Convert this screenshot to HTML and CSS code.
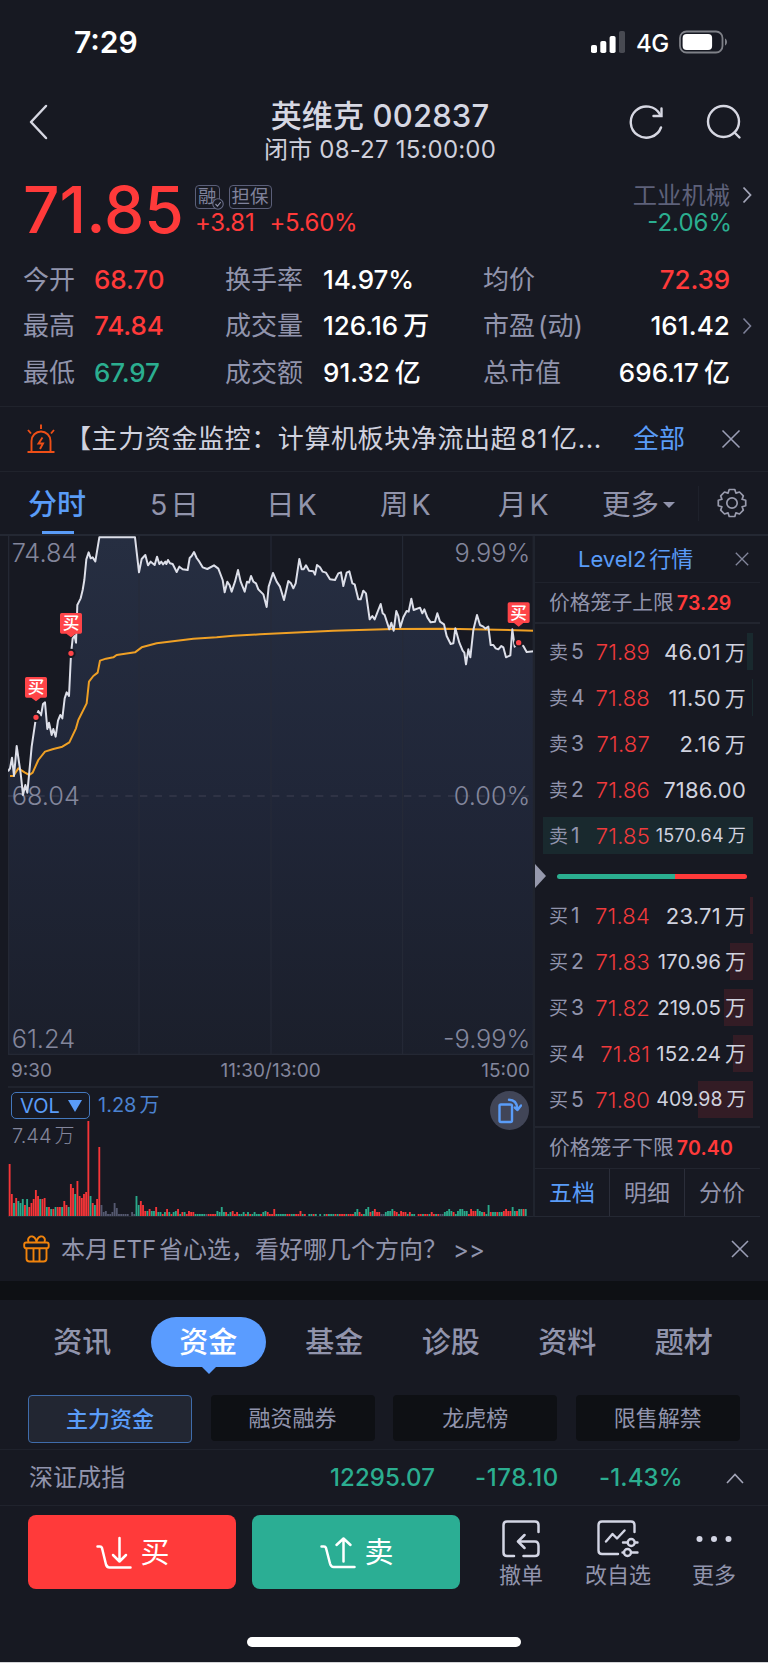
FILE: index.html
```html
<!DOCTYPE html>
<html lang="zh-CN">
<head>
    <meta charset="UTF-8">
    <meta name="viewport" content="width=device-width, initial-scale=1.0">
    <title>英维克 002837</title>
    <link rel="stylesheet" href="styles.css">
</head>
<body>
    <div class="status-bar">
        <span class="clock">7:29</span>
        <div class="status-icons">
            <svg class="signal" width="35" height="22" viewBox="0 0 35 22">
                <rect x="0" y="14" width="6" height="8" rx="1.8" fill="#fff"/>
                <rect x="9.3" y="10" width="6" height="12" rx="1.8" fill="#fff"/>
                <rect x="18.6" y="5" width="6" height="17" rx="1.8" fill="#fff"/>
                <rect x="28" y="0" width="6" height="22" rx="1.8" fill="#484a52"/>
            </svg>
            <span class="network">4G</span>
            <svg class="battery" width="50" height="24" viewBox="0 0 50 24">
                <rect x="1" y="1.5" width="42.5" height="21" rx="6.5" fill="none" stroke="#7f8188" stroke-width="1.8"/>
                <rect x="3.6" y="4" width="29.5" height="16" rx="4" fill="#fff"/>
                <path d="M46 8.5c2.7 1.2 2.7 5.8 0 7z" fill="#7f8188"/>
            </svg>
        </div>
    </div>

    <header class="header">
        <svg class="back" width="20" height="38" viewBox="0 0 20 38"><path d="M18 3L3 19L18 35" fill="none" stroke="#d6d7e2" stroke-width="2.5" stroke-linecap="round" stroke-linejoin="round"/></svg>
        <div class="heading">
            <h1>英维克 002837</h1>
            <p>闭市 08-27 15:00:00</p>
        </div>
        <div class="header-icons">
            <svg width="36" height="36" viewBox="0 0 36 36" fill="none" stroke="#d6d7e2" stroke-width="2.4" stroke-linecap="round" stroke-linejoin="round">
                <path d="M33 23.5A15.6 15.6 0 1 1 32 10.5"/><path d="M33.5 4.5V12H25.5" stroke-linejoin="miter"/>
            </svg>
            <svg width="36" height="36" viewBox="0 0 36 36" fill="none" stroke="#d6d7e2" stroke-width="2.4" stroke-linecap="round">
                <circle cx="17.5" cy="17.5" r="15.5"/><path d="M28.5 28.5L33.5 33.5"/>
            </svg>
        </div>
    </header>

    <section class="quote">
        <div class="last-price">71.85</div>
        <div class="change">
            <div class="badges">
                <span class="badge rong">融<svg width="12" height="12" viewBox="0 0 11 11"><circle cx="5.5" cy="5.5" r="4.8" fill="#171922" stroke="#676b86"/><path d="M3.2 5.5l1.8 1.9 3-3.6" fill="none" stroke="#8f92ab"/></svg></span>
                <span class="badge">担保</span>
            </div>
            <div class="change-values red"><span>+3.81</span><span>+5.60%</span></div>
        </div>
        <div class="industry">
            <div class="industry-name">工业机械</div>
            <div class="industry-change green">-2.06%</div>
        </div>
        <svg class="more-arrow" width="10" height="18" viewBox="0 0 10 18"><path d="M1.5 1.5L8.5 9L1.5 16.5" fill="none" stroke="#a3a5b8" stroke-width="1.8"/></svg>
    </section>

    <section class="stats">
        <div class="stats-row">
            <span class="k1">今开</span><span class="v1 red">68.70</span>
            <span class="k2">换手率</span><span class="v2">14.97%</span>
            <span class="k3">均价</span><span class="v3 red">72.39</span>
        </div>
        <div class="stats-row">
            <span class="k1">最高</span><span class="v1 red">74.84</span>
            <span class="k2">成交量</span><span class="v2">126.16<i>万</i></span>
            <span class="k3">市盈<i>(动)</i></span><span class="v3">161.42</span>
            <svg class="row-arrow" width="10" height="18" viewBox="0 0 10 18"><path d="M1.5 1.5L8.5 9L1.5 16.5" fill="none" stroke="#7d8098" stroke-width="1.6"/></svg>
        </div>
        <div class="stats-row">
            <span class="k1">最低</span><span class="v1 green">67.97</span>
            <span class="k2">成交额</span><span class="v2">91.32<i>亿</i></span>
            <span class="k3">总市值</span><span class="v3">696.17<i>亿</i></span>
        </div>
    </section>

    <section class="alert">
        <svg class="alarm" width="30" height="30" viewBox="0 0 30 30" fill="none" stroke="#ef4f17" stroke-width="1.9">
            <path d="M5.5 27V17a9.5 9.5 0 0 1 19 0V27M1.5 28H28.5"/>
            <path d="M15 0.5V5M2 6L5 9.5M28 6L25 9.5"/>
            <path d="M16.5 13.5L12.5 19.5H17L14 25"/>
        </svg>
        <span class="alert-text">【主力资金监控：计算机板块净流出超<i>81</i><i>亿...</i></span>
        <span class="alert-all">全部</span>
        <svg class="close" width="20" height="20" viewBox="0 0 20 20"><path d="M1.5 1.5L18.5 18.5M18.5 1.5L1.5 18.5" stroke="#9a9db4" stroke-width="1.6"/></svg>
    </section>

    <nav class="periods">
        <span class="active">分时</span>
        <span>5<i>日</i></span>
        <span>日<i>K</i></span>
        <span>周<i>K</i></span>
        <span>月<i>K</i></span>
        <span class="more">更多<b class="caret"></b></span>
        <svg class="gear" width="30" height="30" viewBox="0 0 30 30" fill="none" stroke="#999bad" stroke-width="1.7" stroke-linejoin="round">
            <path d="M12.2 1.5h5.6l1.1 3.6 3.6-1.1 3.8 3.9-1.2 3.4 3.6 1v5.4l-3.6 1 1.2 3.4-3.8 3.9-3.6-1.1-1.1 3.6h-5.6l-1.1-3.6-3.6 1.1-3.8-3.9 1.2-3.4-3.6-1v-5.4l3.6-1-1.2-3.4 3.8-3.9 3.6 1.1z"/>
            <circle cx="15" cy="15" r="5.2"/>
        </svg>
    </nav>

    <main class="market">
        <div class="charts">
            <svg class="price-chart" width="526" height="519" viewBox="24 18 1578 1557">
                <defs>
                    <linearGradient id="area" x1="0" y1="0" x2="0" y2="1">
                        <stop offset="0" stop-color="#262e41"/>
                        <stop offset="0.5" stop-color="#202638"/>
                        <stop offset="1" stop-color="#1b1f2b"/>
                    </linearGradient>
                </defs>
                <path id="fill" fill="url(#area)"/>
                <path d="M417 18V1575M813 18V1575M1208 18V1575" stroke="#272b38" stroke-width="3"/>
                <path d="M26 18V1575M24 1573H1602M1600 18V1575" stroke="#242834" stroke-width="4" fill="none"/>
                <path d="M24 798H1602" stroke="#343949" stroke-width="5" stroke-dasharray="22 22"/>
                <g class="axis">
                    <text x="35" y="97">74.84</text>
                    <text x="35" y="826">68.04</text>
                    <text x="35" y="1555">61.24</text>
                    <text x="1591" y="97" text-anchor="end">9.99%</text>
                    <text x="1591" y="826" text-anchor="end">0.00%</text>
                    <text x="1591" y="1555" text-anchor="end">-9.99%</text>
                </g>
                <path fill="none" stroke="#efa025" stroke-width="6" stroke-linejoin="round" d="M30 738L40 738 55 715 75 728 88 735 98 728 115 690 135 665 160 657 187 650 208 637 228 595 235 570 260 520 267 455 280 438 293 428 300 392 318 386 340 382 350 375 405 367 425 352 470 340 580 326 650 322 700 317 780 313 1000 302 1180 297 1340 296 1602 302"/>
                <path id="line" fill="none" stroke="#dddfe9" stroke-width="6" stroke-linejoin="round"/>
                <g class="mark" transform="translate(108 562)"><path d="M-28 -121H28Q33 -121 33 -116V-64Q33 -59 28 -59H14L0 -48 -14 -59H-28Q-33 -59 -33 -64V-116Q-33 -121 -28 -121Z"/><circle r="11"/><text y="-72">买</text></g>
                <g class="mark" transform="translate(213 370)"><path d="M-28 -121H28Q33 -121 33 -116V-64Q33 -59 28 -59H14L0 -48 -14 -59H-28Q-33 -59 -33 -64V-116Q-33 -121 -28 -121Z"/><circle r="11"/><text y="-72">买</text></g>
                <g class="mark" transform="translate(1556 338)"><path d="M-28 -121H28Q33 -121 33 -116V-64Q33 -59 28 -59H14L0 -48 -14 -59H-28Q-33 -59 -33 -64V-116Q-33 -121 -28 -121Z"/><circle r="11"/><text y="-72">买</text></g>
            </svg>
            <div class="times"><span>9:30</span><span class="noon">11:30/13:00</span><span>15:00</span></div>
            <div class="volume">
                <div class="volume-head">
                    <span class="vol-button">VOL<b></b></span>
                    <span class="vol-value">1.28<i>万</i></span>
                    <span class="rotate">
                        <svg width="24" height="26" viewBox="0 0 24 26" fill="none" stroke="#5a9cf8" stroke-width="2.4" stroke-linecap="round" stroke-linejoin="round">
                            <rect x="1.5" y="6.5" width="12.5" height="17.5" rx="1.5"/>
                            <path d="M11 1.8C16 1.8 19 5 19.5 11M16.8 9.5L19.5 12L23 7.5"/>
                        </svg>
                    </span>
                </div>
                <div class="vol-max">7.44<i>万</i></div>
                <svg id="bars" class="bars" width="526" height="96" viewBox="0 0 526 96"></svg>
            </div>
        </div>

        <aside class="level2">
            <div class="level2-title">Level2<i>行情</i>
                <svg width="14" height="14" viewBox="0 0 14 14"><path d="M0.8 0.8L13.2 13.2M13.2 0.8L0.8 13.2" stroke="#83869b" stroke-width="1.3"/></svg>
            </div>
            <div class="limit upper">价格笼子上限<b>73.29</b></div>
            <div class="book sells">
                <div class="order"><span class="bar sell" style="width:6px"></span><span class="pos">卖<i>5</i></span><span class="price">71.89</span><span class="amount">46.01<i>万</i></span></div>
                <div class="order"><span class="bar sell" style="width:1px"></span><span class="pos">卖<i>4</i></span><span class="price">71.88</span><span class="amount">11.50<i>万</i></span></div>
                <div class="order"><span class="pos">卖<i>3</i></span><span class="price">71.87</span><span class="amount">2.16<i>万</i></span></div>
                <div class="order"><span class="pos">卖<i>2</i></span><span class="price">71.86</span><span class="amount">7186.00</span></div>
                <div class="order"><span class="bar sell" style="width:210px"></span><span class="pos">卖<i>1</i></span><span class="price">71.85</span><span class="amount tiny">1570.64<i>万</i></span></div>
            </div>
            <div class="ratio"><b class="collapse"></b><span class="ratio-sell"></span><span class="ratio-buy"></span></div>
            <div class="book buys">
                <div class="order"><span class="bar buy" style="width:3px"></span><span class="pos">买<i>1</i></span><span class="price">71.84</span><span class="amount">23.71<i>万</i></span></div>
                <div class="order"><span class="bar buy" style="width:23px"></span><span class="pos">买<i>2</i></span><span class="price">71.83</span><span class="amount small">170.96<i>万</i></span></div>
                <div class="order"><span class="bar buy" style="width:29px"></span><span class="pos">买<i>3</i></span><span class="price">71.82</span><span class="amount small">219.05<i>万</i></span></div>
                <div class="order"><span class="bar buy" style="width:20px"></span><span class="pos">买<i>4</i></span><span class="price">71.81</span><span class="amount small">152.24<i>万</i></span></div>
                <div class="order"><span class="bar buy" style="width:55px"></span><span class="pos">买<i>5</i></span><span class="price">71.80</span><span class="amount smaller">409.98<i>万</i></span></div>
            </div>
            <div class="limit lower">价格笼子下限<b>70.40</b></div>
            <div class="book-tabs"><span class="active">五档</span><span>明细</span><span>分价</span></div>
        </aside>
    </main>

    <section class="promo">
        <svg width="28" height="28" viewBox="0 0 28 28" fill="none" stroke="#f0830c" stroke-width="1.9" stroke-linejoin="round">
            <rect x="1.2" y="7.5" width="24.5" height="5.8" rx="2"/>
            <path d="M3.5 13.5V23.5Q3.5 26.5 6.5 26.5H20.5Q23.5 26.5 23.5 23.5V13.5M10.5 13.5V26.5M16.5 13.5V26.5"/>
            <path d="M5.5 7C4 3 7 1 9.5 1.5 12 2 13 4.5 13.5 7 14 4.5 15 2 17.5 1.5 20 1 23 3 21.5 7"/>
        </svg>
        <span class="promo-text">本月<i>ETF</i><i>省心选，看好哪几个方向？</i><em>&gt;&gt;</em></span>
        <svg class="close" width="18" height="18" viewBox="0 0 18 18"><path d="M1 1L17 17M17 1L1 17" stroke="#9a9db4" stroke-width="1.6"/></svg>
    </section>

    <nav class="sections">
        <span>资讯</span>
        <span class="active">资金</span>
        <span>基金</span>
        <span>诊股</span>
        <span>资料</span>
        <span>题材</span>
    </nav>

    <div class="funds">
        <span class="active">主力资金</span>
        <span>融资融券</span>
        <span>龙虎榜</span>
        <span>限售解禁</span>
    </div>

    <div class="index-row">
        <span class="index-name">深证成指</span>
        <span class="index-value">12295.07</span>
        <span class="index-diff">-178.10</span>
        <span class="index-rate">-1.43%</span>
        <svg width="18" height="11" viewBox="0 0 18 11"><path d="M1 10L9 1.5L17 10" fill="none" stroke="#a3a5b8" stroke-width="1.6"/></svg>
    </div>

    <footer class="actions">
        <button class="trade buy-button">
            <svg width="36" height="34" viewBox="0 0 36 34" fill="none" stroke="#fff" stroke-width="2.5" stroke-linecap="round" stroke-linejoin="round">
                <path d="M1.5 10.5H4Q5.5 10.5 6 12L10 28.5Q11 31.5 13.5 31.5H34.5M23.5 2V25.5M17 19L23.5 25.5L30 19"/>
            </svg>买
        </button>
        <button class="trade sell-button">
            <svg width="36" height="34" viewBox="0 0 36 34" fill="none" stroke="#fff" stroke-width="2.5" stroke-linecap="round" stroke-linejoin="round">
                <path d="M1.5 10.5H4Q5.5 10.5 6 12L10 27.5Q11 31 13.5 31H34.5M23.5 25.5V2.5M16.5 9L23.5 2.5L30.5 9"/>
            </svg>卖
        </button>
        <div class="action cancel">
            <svg width="38" height="38" viewBox="0 0 38 38" fill="none" stroke="#d3d5e4" stroke-width="2.5" stroke-linecap="round" stroke-linejoin="round">
                <path d="M12 36H5Q1.5 36 1.5 32.5V5Q1.5 1.5 5 1.5H33Q36.5 1.5 36.5 5V12M21.5 36H33Q36.5 36 36.5 32.5V26Q36.5 21.5 33 21.5H16.5M22.5 15L16 21.5L22.5 28"/>
            </svg>
            <span>撤单</span>
        </div>
        <div class="action custom">
            <svg width="42" height="38" viewBox="0 0 42 38" fill="none" stroke="#d3d5e4" stroke-width="2.4" stroke-linecap="round" stroke-linejoin="round">
                <path d="M21 34H5Q1.5 34 1.5 30.5V5Q1.5 1.5 5 1.5H34Q37.5 1.5 37.5 5V12M9 21.5L15.5 14L20 18.5L27.5 10.5M26 22.5H30M38 22.5H40.5M25.5 32.5H27M34.5 32.5H40.5"/>
                <circle cx="34.2" cy="22.5" r="3.5"/><circle cx="30.5" cy="32.5" r="3.5"/>
            </svg>
            <span>改自选</span>
        </div>
        <div class="action other">
            <svg width="36" height="38" viewBox="0 0 36 38" fill="#d3d5e4"><circle cx="3.5" cy="19" r="3"/><circle cx="18" cy="19" r="3"/><circle cx="32.5" cy="19" r="3"/></svg>
            <span>更多</span>
        </div>
    </footer>
    <div class="home-indicator"></div>

    <script>
        const prices = '24 724 30 715 36 683 42 738 50 648 56 690 62 730 69 795 76 765 82 788 88 725 95 650 108 562 115 543 123 556 129 522 135 517 142 597 147 578 155 615 160 597 167 620 174 572 181 555 187 565 194 505 200 487 207 498 213 372 218 325 224 318 228 338 232 225 236 217 242 205 248 180 253 150 259 88 266 67 272 85 278 82 286 94 298 22 405 22 417 127 425 87 436 75 444 106 452 95 464 105 471 80 478 102 484 95 489 103 496 95 499 102 504 90 510 100 518 102 530 126 538 110 548 118 563 120 569 84 575 78 582 66 590 84 598 95 608 112 622 117 642 106 655 116 668 150 674 187 682 155 689 166 695 185 705 155 714 120 722 155 734 185 741 155 747 158 753 138 760 155 768 160 775 178 790 193 800 231 806 170 819 129 830 155 840 170 852 210 865 153 873 160 880 175 887 160 898 87 905 118 911 118 918 106 927 122 940 124 945 134 951 105 960 112 968 125 978 128 990 148 1005 150 1015 130 1023 127 1030 168 1040 128 1048 124 1057 160 1064 163 1075 208 1082 208 1090 182 1098 190 1109 268 1117 258 1124 268 1131 250 1142 222 1148 250 1154 255 1168 298 1174 278 1181 302 1189 243 1195 258 1201 292 1210 262 1220 243 1226 245 1234 206 1241 240 1260 233 1267 250 1273 238 1282 262 1292 277 1305 275 1312 250 1320 275 1332 283 1340 318 1352 342 1360 340 1366 295 1378 338 1388 362 1393 368 1398 403 1405 358 1411 382 1420 300 1431 255 1440 285 1450 290 1456 296 1465 290 1472 345 1480 345 1487 355 1495 358 1504 348 1510 352 1518 382 1531 376 1537 298 1544 350 1556 338 1570 348 1580 366 1602 364';
        document.getElementById('line').setAttribute('d', 'M' + prices);
        document.getElementById('fill').setAttribute('d', 'M' + prices + ' L1602 1575 24 1575Z');

        // one entry per minute: r = up, g = down, n = flat, followed by the height
        const volumes = ('r52 r22 g13 r18 g15 g13 g17 r11 g17 r9 r13 r17 r26 r20 g17 r17 r18 g9 r9 g7 r7 g9 r9 r9 g9 r15 r11 g9 r32 r28 ' +
            'g22 r35 r20 r18 r22 r24 r95 g20 r13 g11 r17 r69 n11 n4 n5 n2 n2 n4 n13 n8 n2 n2 n2 n2 n2 n0 n4 n2 g20 g11 ' +
            'r15 r11 r5 g5 r7 g5 g5 r9 g4 g4 r2 g4 r7 g4 r2 g4 g5 r7 g2 r4 g4 r2 r5 r4 r4 g2 g2 g2 g2 g2 ' +
            'n2 r2 r2 r2 r2 g5 g4 g9 g4 r4 g2 g4 r5 r2 r4 g2 g2 g4 r2 g4 r2 g2 g4 g2 g2 r2 g4 g5 r4 r2 ' +
            'r2 r7 g2 g2 g2 g2 g2 r2 r2 g2 g2 r2 r2 r5 g2 r2 n0 g2 g2 r2 g2 n0 g2 n0 g2 r2 g2 g2 g2 r2 ' +
            'g2 r2 r2 r2 g2 r2 r2 r2 g4 g7 r4 r2 g2 g7 g9 r4 g5 r7 r4 r4 n2 n2 g4 g5 g5 g7 r5 r4 g2 ' +
            'r5 r4 r4 g2 r4 g2 g2 n0 r2 r2 g2 r2 r2 g2 r4 r2 g2 r2 n2 n2 g4 g5 g7 g5 r4 g2 g5 g7 g7 g5 ' +
            'g5 r2 r7 r5 r5 g7 g5 g4 r4 g2 g11 r4 g4 g4 r4 g4 g4 r5 r7 r5 r5 g9 g5 r5 g7 g7 r7 g7').split(' ');
        const colors = { r: '#f63538', g: '#2aa98a', n: '#555970' };
        document.getElementById('bars').innerHTML = volumes.map((v, i) => {
            const h = Number(v.slice(1));
            return `<rect x="${(0.7 + i * 2.187).toFixed(2)}" y="${96 - h}" width="1.85" height="${h}" fill="${colors[v[0]]}"/>`;
        }).join('');
    </script>
</body>
</html>
```

FILE: styles.css
```css
* {
    box-sizing: border-box;
}
body {
    width: 768px;
    height: 1663px;
    margin: 0;
    overflow: hidden;
    background-color: #171922;
    color: #9194ac;
    font-family: Inter, "Noto Sans CJK SC", sans-serif;
    line-height: 1.2;
    border-bottom: 1px solid #d4d5d8;
}
svg {
    display: block;
    flex: none;
}
span, div, h1, p {
    white-space: nowrap;
}
i, em {
    font-style: normal;
}
i {
    margin-left: 3px;
}
.red {
    color: #ff3a3a;
}
.green {
    color: #2bae90;
}

/* status bar */
.status-bar {
    display: flex;
    justify-content: space-between;
    height: 84px;
    padding: 0 39px 0 74px;
    color: #fff;
    line-height: 85px;
}
.clock {
    font-size: 30px;
    font-weight: 600;
}
.status-icons {
    display: flex;
    align-items: center;
}
.network {
    width: 34px;
    margin: 3px 9px 0 10px;
    font-size: 24px;
    font-weight: 500;
    letter-spacing: -0.5px;
}

/* title */
.header {
    display: flex;
    align-items: flex-start;
    height: 92px;
    padding: 0 26px 0 28px;
}
.back {
    margin-top: 19px;
}
.heading {
    width: 240px;
    margin-left: 212px;
    text-align: center;
}
.heading h1 {
    margin: 13px 0 0;
    color: #d6d7e2;
    font-size: 31px;
    font-weight: 500;
    line-height: 38px;
    letter-spacing: 0.15px;
}
.heading p {
    margin: 0;
    color: #cfd0dc;
    font-size: 24px;
    line-height: 29px;
    letter-spacing: 0.2px;
}
.header-icons {
    display: flex;
    gap: 42px;
    margin: 20px 0 0 128px;
}

/* last price */
.quote {
    display: flex;
    height: 80px;
    padding-left: 23px;
}
.last-price {
    width: 172px;
    color: #ff3a3a;
    font-size: 64px;
    font-weight: 500;
    line-height: 68px;
}
.badges {
    display: flex;
    gap: 9px;
    margin-top: 9px;
}
.badge {
    position: relative;
    height: 24px;
    padding: 0 2px;
    border: 1.5px solid #5b5f79;
    border-radius: 4px;
    color: #80839c;
    font-size: 18.5px;
    line-height: 21px;
}
.badge svg {
    position: absolute;
    right: -5px;
    bottom: -2px;
}
.change-values {
    display: flex;
    gap: 15px;
    font-size: 24px;
    line-height: 27px;
    letter-spacing: -0.3px;
}
.industry {
    margin-left: auto;
    padding-top: 6px;
    text-align: right;
}
.industry-name {
    color: #5e617a;
    font-size: 24.3px;
    line-height: 26px;
}
.industry-change {
    margin-right: -2px;
    font-size: 24px;
    line-height: 30px;
}
.more-arrow {
    margin: 10px 16px 0 12px;
}

/* stats */
.stats {
    height: 151px;
    border-bottom: 1px solid #20232c;
}
.stats-row {
    display: flex;
    align-items: center;
    height: 46.5px;
    padding-left: 23px;
    font-size: 26px;
}
.k1 {
    width: 71px;
}
.v1 {
    width: 131px;
    font-weight: 500;
    letter-spacing: -0.1px;
}
.k2 {
    width: 98px;
}
.v2 {
    width: 160px;
    color: #fff;
    font-weight: 500;
}
.v2 i, .v3 i {
    margin-left: 5px;
}
.k3 {
    width: 110px;
}
.v3 {
    width: 137px;
    color: #fff;
    font-weight: 500;
    text-align: right;
    letter-spacing: 0.1px;
}
.v3.red {
    color: #ff3a3a;
    letter-spacing: -0.1px;
}
.row-arrow {
    margin-left: 12px;
}

/* alert */
.alert {
    display: flex;
    align-items: center;
    height: 65px;
    padding-left: 26px;
    border-bottom: 1px solid #20232c;
    font-size: 26px;
}
.alert-text {
    width: 541px;
    margin-left: 9px;
    color: #d0d2df;
    letter-spacing: 0.6px;
}
.alert-all {
    width: 88px;
    margin-left: 27px;
    color: #5a9cf8;
}

/* period tabs */
.periods {
    display: flex;
    align-items: center;
    height: 64px;
    padding-left: 28px;
    border-bottom: 2px solid #242833;
    font-size: 28.5px;
}
.periods > span {
    position: relative;
    width: 116px;
    padding-top: 3px;
    line-height: 59px;
}
.periods .active {
    width: 122px;
    color: #5a9cf8;
    font-size: 29px;
    font-weight: 500;
}
.periods .active::after {
    content: "";
    position: absolute;
    left: 14px;
    bottom: 0;
    width: 32px;
    height: 3px;
    background-color: #5a9cf8;
}
.periods > span:nth-child(3) {
    width: 114px;
}
.periods > span:nth-child(4) {
    width: 118px;
}
.periods > span:nth-child(5) {
    width: 104px;
}
.periods .more {
    display: flex;
    align-items: center;
    width: 97px;
    border-right: 1px solid #1e212b;
    line-height: 32px;
}
.caret {
    margin-left: 4px;
    border: 6px solid transparent;
    border-top: 6px solid #9194ac;
    border-bottom: 0;
}
.gear {
    margin-left: 18px;
}

/* charts */
.market {
    display: flex;
    height: 681px;
    padding-left: 8px;
}
.charts {
    width: 526px;
}
.axis text {
    fill: #83869c;
    font-size: 76px;
    font-weight: 300;
}
.mark path {
    fill: #ff4448;
}
.mark circle {
    fill: #ff4448;
    stroke: #171922;
    stroke-width: 6;
}
.mark text {
    fill: #fff;
    font-size: 50px;
    font-weight: 500;
    text-anchor: middle;
}
.times {
    display: flex;
    justify-content: space-between;
    height: 33px;
    padding: 0 4px 0 3px;
    border-bottom: 2px solid #20232d;
    color: #83869c;
    font-size: 19px;
    line-height: 31px;
}
.noon {
    margin-left: 8px;
}
.volume {
    height: 129px;
    border-bottom: 1px solid #242833;
}
.volume-head {
    display: flex;
    height: 32px;
    padding: 4px 5px 0 3px;
}
.vol-button {
    display: flex;
    align-items: center;
    width: 79px;
    height: 27px;
    padding-left: 8px;
    border: 1.5px solid #4478bd;
    border-radius: 5px;
    color: #5a9cf8;
    font-size: 20px;
}
.vol-button b {
    margin-left: 8px;
    border: 7px solid transparent;
    border-top: 12px solid #5a9cf8;
    border-bottom: 0;
}
.vol-value {
    margin-left: 8px;
    color: #4b82d0;
    font-size: 20px;
    line-height: 27px;
}
.rotate {
    display: flex;
    align-items: center;
    justify-content: center;
    width: 39px;
    height: 39px;
    margin: -1px 0 0 auto;
    border-radius: 50%;
    background-color: #414557;
}
.vol-max {
    height: 0;
    padding-left: 4px;
    color: #83869c;
    font-size: 20px;
    font-weight: 300;
    line-height: 33px;
}

/* level 2 book */
.level2 {
    width: 227px;
    margin-left: -1px;
    border-left: 2px solid #20242e;
    border-bottom: 1px solid #242833;
}
.level2-title {
    display: flex;
    align-items: center;
    height: 47px;
    padding: 0 11px 0 43px;
    border-bottom: 1px solid #1f222c;
    color: #5a9cf8;
    font-size: 22px;
}
.level2-title svg {
    margin-left: auto;
}
.limit {
    height: 41px;
    padding-left: 14px;
    border-bottom: 2px solid #22252f;
    font-size: 20.8px;
    line-height: 40px;
}
.limit b {
    margin-left: 3px;
    color: #ff3a3a;
    font-size: 19.5px;
    font-weight: 600;
    letter-spacing: 0.2px;
}
.order {
    position: relative;
    display: flex;
    align-items: center;
    height: 46px;
    padding: 0 14px 0 14px;
    font-size: 22px;
}
.sells {
    padding-top: 5px;
}
.bar {
    position: absolute;
    top: 4px;
    right: 7px;
    height: 37px;
}
.bar.sell {
    background-color: #19292e;
}
.bar.buy {
    background-color: #331c25;
}
.order > span:not(.bar) {
    position: relative;
}
.pos {
    width: 42px;
    font-size: 19px;
}
.pos i {
    font-size: 21px;
}
.price {
    width: 59px;
    color: #f03a3c;
    font-weight: 300;
    text-align: right;
    letter-spacing: 0.2px;
}
.amount {
    flex: 1;
    color: #d0d2df;
    text-align: right;
    letter-spacing: 0.2px;
}
.amount i {
    margin-left: 4px;
    font-size: 21px;
}
.amount.small {
    font-size: 20.5px;
    letter-spacing: 0;
}
.amount.smaller, .amount.smaller i {
    font-size: 19.5px;
    letter-spacing: 0;
}
.amount.tiny, .amount.tiny i {
    font-size: 18px;
}
.ratio {
    display: flex;
    align-items: center;
    height: 34px;
    padding: 0 13px 0 0;
}
.collapse {
    margin-right: 11px;
    border: 12px solid transparent;
    border-left: 11px solid #9699ad;
    border-right: 0;
}
.ratio-sell {
    width: 119px;
    height: 5px;
    border-radius: 3px 0 0 3px;
    background-color: #2bae90;
}
.ratio-buy {
    width: 72px;
    height: 5px;
    border-radius: 0 3px 3px 0;
    background-color: #ff3a3a;
}
.lower {
    height: 43px;
    margin-top: 3px;
    border-top: 2px solid #22252f;
    border-bottom-width: 1px;
}
.book-tabs {
    display: flex;
    height: 47px;
    font-size: 23px;
    line-height: 49px;
    text-align: center;
}
.book-tabs span {
    width: 75px;
}
.book-tabs span:first-child {
    width: 74px;
}
.book-tabs span + span {
    border-left: 1px solid #2b2e3a;
}
.book-tabs .active {
    color: #5a9cf8;
}

/* promo */
.promo {
    display: flex;
    align-items: center;
    height: 64px;
    padding-left: 23px;
    font-size: 24px;
}
.promo-text {
    flex: 1;
    margin: 2px 0 0 10px;
}
.promo-text em {
    margin-left: 6px;
}
.promo .close {
    margin-right: 19px;
}

/* section tabs */
.sections {
    display: flex;
    align-items: center;
    height: 102px;
    padding: 1px 26px 0 24px;
    border-top: 19px solid #0e1014;
    font-size: 29px;
    font-weight: 500;
}
.sections span {
    width: 117px;
    padding-top: 3px;
    text-align: center;
}
.sections .active {
    position: relative;
    width: 116px;
    height: 50px;
    margin: 0 10px;
    padding-top: 1px;
    border-radius: 25px;
    background-color: #5a9cff;
    color: #fff;
    line-height: 50px;
}
.sections .active::after {
    content: "";
    position: absolute;
    left: 50px;
    bottom: -7px;
    border: 8px solid transparent;
    border-top: 8px solid #5a9cff;
    border-bottom: 0;
}
.funds {
    display: flex;
    gap: 18.6px;
    height: 67px;
    padding: 12px 28px 0;
    border-bottom: 1px solid #1f222c;
    font-size: 22px;
    line-height: 46px;
    text-align: center;
}
.funds span {
    width: 164px;
    height: 46px;
    border-radius: 4px;
    background-color: #0e1014;
}
.funds .active {
    height: 48px;
    border: 1.5px solid #3f6cab;
    background-color: #222632;
    color: #5a9cf8;
    font-weight: 500;
}

/* index */
.index-row {
    display: flex;
    align-items: center;
    height: 56px;
    padding: 2px 0 0 29px;
    border-bottom: 1px solid #20232d;
    color: #2bae90;
    font-size: 24px;
    font-weight: 500;
    letter-spacing: 0.1px;
}
.index-name {
    width: 301px;
    color: #9194ac;
    font-weight: 400;
}
.index-value {
    width: 145px;
}
.index-diff {
    width: 124px;
    letter-spacing: 0.6px;
}
.index-rate {
    width: 127px;
}

/* bottom actions */
.actions {
    display: flex;
    height: 131px;
    padding: 9px 0 0 28px;
}
.trade {
    display: flex;
    align-items: center;
    justify-content: center;
    gap: 8px;
    width: 208px;
    height: 74px;
    margin-right: 16px;
    padding: 2px 0 0 2px;
    border: 0;
    border-radius: 8px;
    color: #fff;
    font-family: inherit;
    font-size: 29px;
    line-height: 34px;
}
.buy-button {
    background-color: #ff3a3a;
}
.sell-button {
    background-color: #2bae94;
}
.action {
    display: flex;
    flex-direction: column;
    align-items: center;
    width: 70px;
    padding-top: 5px;
    font-size: 22px;
    line-height: 32px;
}
.action span {
    margin-top: 1px;
}
.cancel {
    margin-left: 10px;
}
.custom {
    margin-left: 27px;
}
.other {
    margin-left: 26px;
}
.home-indicator {
    width: 274px;
    height: 10px;
    margin: 0 auto;
    border-radius: 5px;
    background-color: #fff;
}
```
